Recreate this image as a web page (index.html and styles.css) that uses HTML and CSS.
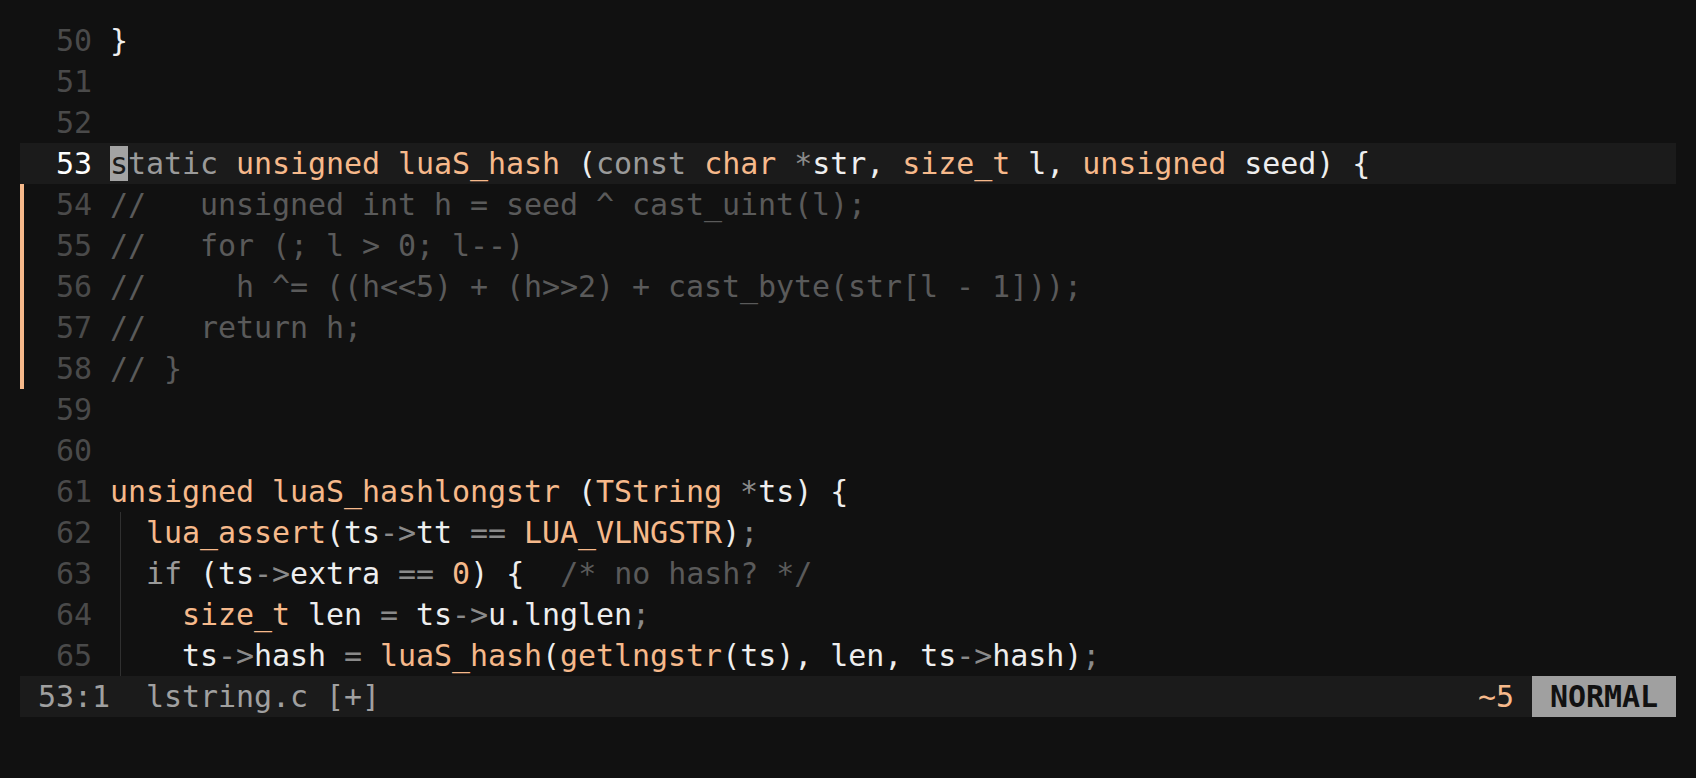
FILE: index.html
```html
<!DOCTYPE html>
<html>
<head>
<meta charset="utf-8">
<link rel="stylesheet" href="styles.css">
</head>
<body>
<div class="editor">
  <div class="line"><span class="sign"></span><span class="num">50</span><span class="code">}</span></div>
  <div class="line"><span class="sign"></span><span class="num">51</span><span class="code"></span></div>
  <div class="line"><span class="sign"></span><span class="num">52</span><span class="code"></span></div>
  <div class="line cur"><span class="sign"></span><span class="num">53</span><span class="code"><span class="cursor">s</span><span class="kw">tatic</span> <span class="ty">unsigned</span> <span class="ty">luaS_hash</span> (<span class="kw">const</span> <span class="ty">char</span> <span class="op">*</span>str, <span class="ty">size_t</span> l, <span class="ty">unsigned</span> seed) {</span></div>
  <div class="line chg"><span class="sign"></span><span class="num">54</span><span class="code cm">//   unsigned int h = seed ^ cast_uint(l);</span></div>
  <div class="line chg"><span class="sign"></span><span class="num">55</span><span class="code cm">//   for (; l &gt; 0; l--)</span></div>
  <div class="line chg"><span class="sign"></span><span class="num">56</span><span class="code cm">//     h ^= ((h&lt;&lt;5) + (h&gt;&gt;2) + cast_byte(str[l - 1]));</span></div>
  <div class="line chg"><span class="sign"></span><span class="num">57</span><span class="code cm">//   return h;</span></div>
  <div class="line chg"><span class="sign"></span><span class="num">58</span><span class="code cm">// }</span></div>
  <div class="line"><span class="sign"></span><span class="num">59</span><span class="code"></span></div>
  <div class="line"><span class="sign"></span><span class="num">60</span><span class="code"></span></div>
  <div class="line"><span class="sign"></span><span class="num">61</span><span class="code"><span class="ty">unsigned</span> <span class="ty">luaS_hashlongstr</span> (<span class="ty">TString</span> <span class="op">*</span>ts) {</span></div>
  <div class="line"><span class="sign"></span><span class="num">62</span><span class="code guide">  <span class="ty">lua_assert</span>(ts<span class="op">-&gt;</span>tt <span class="op">==</span> <span class="ty">LUA_VLNGSTR</span>)<span class="op">;</span></span></div>
  <div class="line"><span class="sign"></span><span class="num">63</span><span class="code guide">  <span class="kw">if</span> (ts<span class="op">-&gt;</span>extra <span class="op">==</span> <span class="ty">0</span>) {  <span class="cm">/* no hash? */</span></span></div>
  <div class="line"><span class="sign"></span><span class="num">64</span><span class="code guide">    <span class="ty">size_t</span> len <span class="op">=</span> ts<span class="op">-&gt;</span>u.lnglen<span class="op">;</span></span></div>
  <div class="line"><span class="sign"></span><span class="num">65</span><span class="code guide">    ts<span class="op">-&gt;</span>hash <span class="op">=</span> <span class="ty">luaS_hash</span>(<span class="ty">getlngstr</span>(ts), len, ts<span class="op">-&gt;</span>hash)<span class="op">;</span></span></div>
  <div class="status">
    <span class="st-left">53:1  lstring.c [+]</span>
    <span class="st-right"><span class="diff">~5</span><span class="mode">NORMAL</span></span>
  </div>
</div>
</body>
</html>
```
FILE: styles.css
```css
html, body {
  margin: 0;
  padding: 0;
  background: #111111;
}
body {
  padding: 20px;
}
.editor {
  width: 1656px;
  font-family: "DejaVu Sans Mono", "Liberation Mono", monospace;
  font-size: 30px;
  letter-spacing: -0.06px;
  line-height: 41px;
  color: #eeeeee;
}
.line {
  display: flex;
  height: 41px;
  white-space: pre;
}
.sign {
  width: 18px;
  flex: none;
}
.chg .sign {
  background: linear-gradient(#f6b98b, #f6b98b) 0 0 / 4px 100% no-repeat;
}
.num {
  width: 54px;
  padding-right: 18px;
  flex: none;
  text-align: right;
  color: #4a4a4a;
}
.cur {
  background: #1b1b1b;
}
.cur .num {
  color: #ffffff;
}
.code {
  flex: 1;
  white-space: pre;
}
.guide {
  background: linear-gradient(#303030, #303030) 10px 0 / 1px 100% no-repeat;
}
.cursor {
  background: #a3a3a3;
  color: #1b1b1b;
}
.kw {
  color: #9a9a9a;
}
.ty {
  color: #f6b98b;
}
.op {
  color: #8a8a8a;
}
.cm {
  color: #5a5a5a;
}
.status {
  display: flex;
  justify-content: space-between;
  height: 41px;
  background: #1b1b1b;
  white-space: pre;
}
.st-left {
  padding-left: 18px;
  color: #a0a0a0;
}
.st-right {
  display: flex;
}
.diff {
  color: #f6b98b;
  margin-right: 18px;
}
.mode {
  width: 144px;
  text-align: center;
  background: #a0a0a0;
  color: #111111;
  font-weight: bold;
}
```
